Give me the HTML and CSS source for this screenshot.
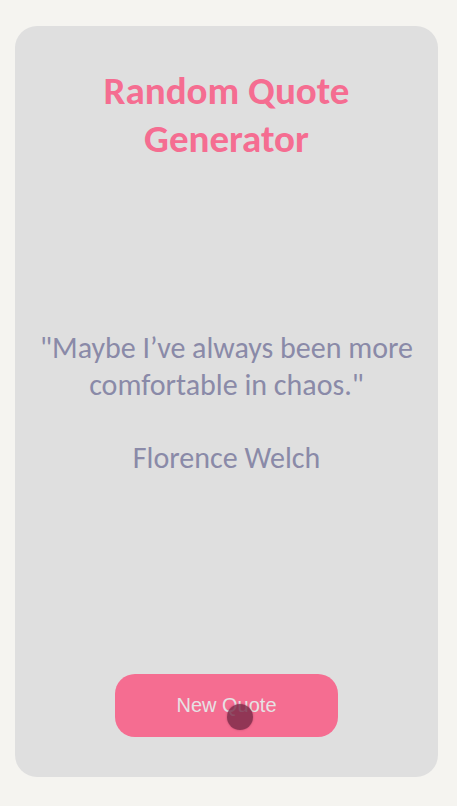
FILE: index.html
```html
<!DOCTYPE html>
<html lang="en">
<head>
<meta charset="utf-8">
<title>Random Quote Generator</title>
<link rel="stylesheet" href="styles.css">
</head>
<body>
<main class="card">
  <h1 class="title">Random Quote Generator</h1>
  <section class="quote-box">
    <p class="quote">"Maybe I’ve always been more comfortable in chaos."</p>
    <p class="author">Florence Welch</p>
  </section>
  <div class="actions">
    <button class="btn">New Quote<span class="touch"></span></button>
  </div>
</main>
</body>
</html>
```
FILE: styles.css
```css
html, body { margin: 0; padding: 0; }
body {
  background: #f5f4f0;
  width: 457px;
  height: 806px;
  padding-top: 26px;
  box-sizing: border-box;
}
.card {
  margin-left: 15px;
  width: 423px;
  height: 751px;
  background: #dfdfdf;
  border-radius: 22px;
  display: flex;
  flex-direction: column;
  align-items: center;
  box-sizing: border-box;
  padding: 41px 10px 40px;
  font-family: "Carlito", "Lato", "Open Sans", sans-serif;
}
.title {
  margin: 0;
  width: 300px;
  text-align: center;
  color: #f56d91;
  font-size: 39px;
  line-height: 48px;
  font-weight: 700;
}
.quote-box {
  flex: 1;
  display: flex;
  flex-direction: column;
  justify-content: center;
  align-items: center;
  text-align: center;
  color: #8a8aa8;
  font-size: 30px;
  line-height: 37px;
  padding-bottom: 33px;
}
.quote { margin: 0; }
.author { margin: 36px 0 0; }
.actions { display: flex; justify-content: center; }
.btn {
  position: relative;
  width: 223px;
  height: 63px;
  border: none;
  border-radius: 20px;
  background: #f56d91;
  color: #e6e2e4;
  font-family: "Liberation Sans", Arial, sans-serif;
  font-size: 20px;
  cursor: pointer;
}
.touch {
  position: absolute;
  left: 112px;
  top: 30px;
  width: 26px;
  height: 26px;
  border-radius: 50%;
  background: rgba(120, 40, 70, 0.8);
  box-shadow: 0 0 2px rgba(120, 40, 70, 0.5);
}
```
